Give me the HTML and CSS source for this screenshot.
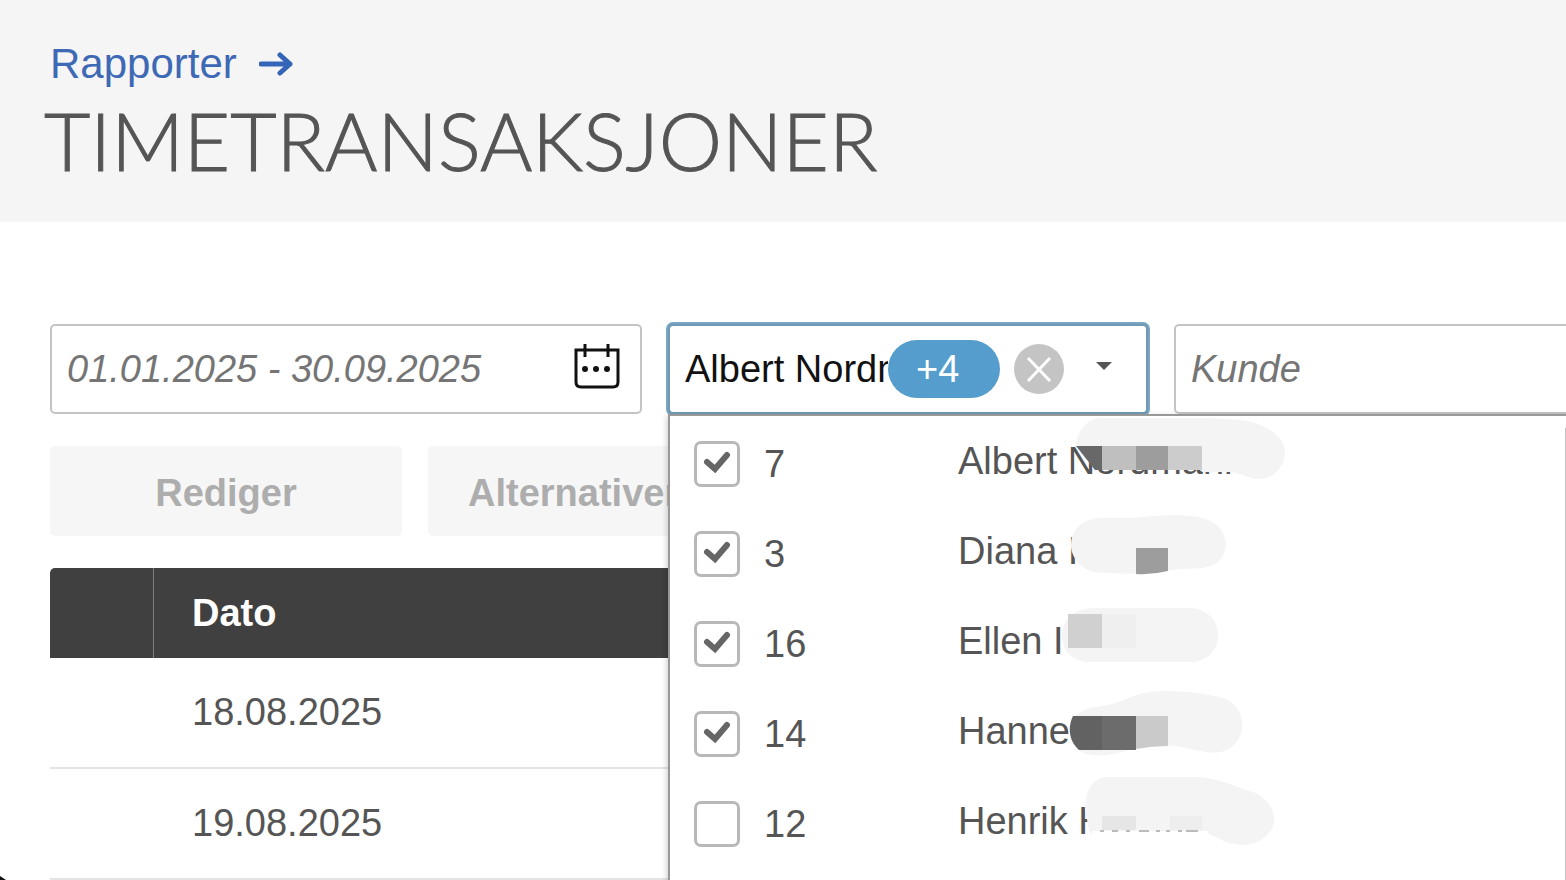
FILE: index.html
```html
<!DOCTYPE html>
<html lang="no">
<head>
  <meta charset="UTF-8">
  <title>Timetransaksjoner</title>
  <link rel="stylesheet" href="styles.css">
</head>
<body>
  <header class="page-header">
    <a href="#" class="breadcrumb">
      Rapporter
      <svg class="arrow" viewBox="0 0 34 26" aria-hidden="true">
        <path d="M2 13H31M21 4L31 13L21 22" />
      </svg>
    </a>
    <h1>TIMETRANSAKSJONER</h1>
  </header>

  <main>
    <div class="filters">
      <div class="field">
        <input type="text" class="field-input placeholder" aria-label="Periode" value="01.01.2025 - 30.09.2025">
        <button type="button" class="calendar" aria-label="Velg periode">
          <svg viewBox="0 0 46 46">
            <path d="M2 6H44V38Q44 43 39 43H7Q2 43 2 38Z" />
            <path d="M11 0V13M34 0V13" />
            <g class="dots">
              <circle cx="11" cy="25" r="3" />
              <circle cx="22" cy="25" r="3" />
              <circle cx="33" cy="25" r="3" />
            </g>
          </svg>
        </button>
      </div>

      <div class="field focused">
        <input type="text" class="field-input" aria-label="Ansatt" value="Albert Nordmann">
        <span class="count">+4</span>
        <button type="button" class="clear" aria-label="Fjern valg">
          <svg viewBox="0 0 50 50"><path d="M14 14L36 37M36 14L14 37" /></svg>
        </button>
        <button type="button" class="caret" aria-label="Vis liste">
          <svg viewBox="0 0 16 8"><path d="M0 0H16L8 8Z" /></svg>
        </button>

        <div class="dropdown">
          <label class="option">
            <input type="checkbox" checked>
            <span class="number">7</span>
            <span class="name">Albert Nordmann
              <svg class="mask" viewBox="0 0 240 90">
                <path class="blob" d="M17 28C20 10 30 0 42 -1H150C180 0 195 2 202 6C218 12 228 24 227 34C226 50 214 60 200 60C188 59 182 54 172 51H37L20 27Z" />
                <path fill="#686868" d="M18 27H44V51H37Z" />
                <path fill="#bfbfbf" d="M44 27H78V51H44Z" />
                <path fill="#9d9d9d" d="M78 27H110V51H78Z" />
                <path fill="#cccccc" d="M110 27H144V51H110Z" />
                <path class="blob" d="M144 27H190V56L172 53H144Z" />
              </svg>
            </span>
          </label>
          <label class="option">
            <input type="checkbox" checked>
            <span class="number">3</span>
            <span class="name">Diana I
              <svg class="mask" viewBox="0 0 240 90">
                <path class="blob" d="M13 38C13 20 24 10 42 9L76 9C105 5 140 5 150 11C172 20 172 45 158 54C148 61 135 59 120 60C90 66 55 65 36 63C24 60 14 50 13 38Z" />
                <path fill="#9d9d9d" d="M78 39H110V62Q94 66 78 65Z" />
              </svg>
            </span>
          </label>
          <label class="option">
            <input type="checkbox" checked>
            <span class="number">16</span>
            <span class="name">Ellen I
              <svg class="mask" viewBox="0 0 240 90">
                <path class="blob" d="M4 36C5 20 16 10 34 9H132C168 10 170 60 134 63H30C14 62 4 52 4 36Z" />
                <path fill="#d0d0d0" d="M10 15H44V49H10Z" />
                <path fill="#efefef" d="M44 15H78V49H44Z" />
              </svg>
            </span>
          </label>
          <label class="option">
            <input type="checkbox" checked>
            <span class="number">14</span>
            <span class="name">Hanne
              <svg class="mask" viewBox="0 0 240 90">
                <path class="blob" d="M12 44C13 24 26 19 44 17C66 14 76 2 106 2C130 2 160 6 170 11C188 22 188 45 176 56C162 69 146 62 132 60C110 53 80 58 64 63C44 68 28 68 20 60C14 56 12 50 12 44Z" />
                <path fill="#626262" d="M15 27H44V61H21C10 51 10 37 15 27Z" />
                <path fill="#6c6c6c" d="M44 27H78V61H44Z" />
                <path fill="#cacaca" d="M78 27H110V57Q94 57 78 60Z" />
              </svg>
            </span>
          </label>
          <label class="option">
            <input type="checkbox">
            <span class="number">12</span>
            <span class="name">Henrik H
              <svg class="mask" viewBox="0 0 240 90">
                <path class="blob" d="M27 33C27 14 32 0 48 -2H140C166 0 182 10 198 14C216 24 219 40 214 50C202 68 184 68 168 63C156 57 144 51 132 51L80 58H36C28 52 31 42 27 33Z" />
                <path fill="#e6e6e6" d="M44 37H78V51H44Z" />
                <path fill="#eeeeee" d="M112 37H144V51H112Z" />
                <path class="below" d="M34 52H150V60H34Z" />
                <path class="traces" d="M42 52h4M54 52h6M68 52h4M81 52h10M98 52h4M108 52h4M120 52h4M128 52h12" />
              </svg>
            </span>
          </label>
          <span class="scrollbar"></span>
        </div>
      </div>

      <div class="field">
        <input type="text" class="field-input" aria-label="Kunde" placeholder="Kunde">
      </div>
    </div>

    <div class="actions">
      <button type="button" disabled>Rediger</button>
      <button type="button" disabled>Alternativer</button>
    </div>

    <table class="transactions">
      <thead>
        <tr><th class="select-col"></th><th>Dato</th></tr>
      </thead>
      <tbody>
        <tr><td></td><td>18.08.2025</td></tr>
        <tr><td></td><td>19.08.2025</td></tr>
      </tbody>
    </table>
  </main>
  <div class="window-corner"></div>
</body>
</html>
```
FILE: styles.css
```css
* {
  box-sizing: border-box;
}

body {
  margin: 0;
  height: 100vh;
  overflow: hidden;
  position: relative;
  background: #fff;
  color: #555;
  font-family: "Liberation Sans", Arial, sans-serif;
  font-size: 38px;
}

button, input {
  font: inherit;
}

button {
  border: none;
  padding: 0;
  background: none;
}

.page-header {
  background: #f5f5f5;
  padding: 40px 44px 34px;
}

.breadcrumb {
  display: flex;
  align-items: center;
  gap: 22px;
  padding-left: 6px;
  color: #3e69b5;
  font-size: 42px;
  line-height: 48px;
  text-decoration: none;
}

.arrow {
  width: 34px;
  height: 26px;
  fill: none;
  stroke: #3465b8;
  stroke-width: 5;
  stroke-linecap: round;
  stroke-linejoin: round;
}

h1 {
  margin: 4px 0 0;
  color: #555;
  font-family: Lato, sans-serif;
  font-size: 80px;
  font-weight: 300;
  line-height: 96px;
  -webkit-text-stroke: 1px #555;
}

main {
  padding: 102px 0 0 50px;
}

/* the row is wider than the window, the last field runs out of view */
.filters {
  display: grid;
  grid-template-columns: 37fr 30fr 37fr;
  gap: 26px;
  width: calc(100% + 200px);
}

.field {
  position: relative;
  display: flex;
  align-items: center;
  min-width: 0;
  height: 90px;
  border: 2px solid #c4c4c4;
  border-radius: 5px;
  background: #fff;
}

.focused {
  border-color: #6f9ab5;
  box-shadow: 0 0 0 2px #78a5c2;
}

.field-input {
  flex: 1;
  min-width: 0;
  height: 100%;
  padding: 0 0 0 15px;
  border: none;
  outline: none;
  background: none;
  color: #111;
}

.placeholder,
.field-input::placeholder {
  color: #757575;
  font-style: italic;
  opacity: 1;
}

.calendar {
  width: 46px;
  height: 46px;
  margin: 0 20px 4px 0;
}

.calendar svg,
.clear svg,
.caret svg {
  display: block;
  width: 100%;
}

.calendar svg {
  fill: none;
  stroke: #111;
  stroke-width: 3;
}

.calendar .dots {
  fill: #111;
  stroke: none;
}

.count {
  width: 112px;
  height: 58px;
  padding-left: 28px;
  border-radius: 29px;
  background: #549dcc;
  color: #fff;
  line-height: 58px;
}

.clear {
  width: 50px;
  height: 50px;
  margin-left: 14px;
  border-radius: 50%;
  background: #c4c4c4;
}

.clear svg {
  fill: none;
  stroke: #fff;
  stroke-width: 3;
}

.caret {
  width: 16px;
  margin: 0 34px 6px 32px;
}

.caret svg {
  fill: #555;
}

.dropdown {
  position: absolute;
  z-index: 1;
  top: 88px;
  left: -2px;
  width: 190%;
  min-height: 520px;
  padding-top: 3px;
  border: 2px solid #999;
  background: #fff;
  box-shadow: -1px 2px 6px rgba(0, 0, 0, 0.2);
}

.option {
  display: flex;
  align-items: center;
  height: 90px;
  padding-left: 24px;
}

.option input {
  appearance: none;
  width: 46px;
  height: 46px;
  margin: 0;
  border: 3px solid #b8b8b8;
  border-radius: 7px;
  background: #fff;
}

.option input:checked {
  background: url("data:image/svg+xml,%3Csvg xmlns='http://www.w3.org/2000/svg' viewBox='0 0 40 40'%3E%3Cpath d='M10 18L18 25L30 11' fill='none' stroke='%23666' stroke-width='6' stroke-linecap='round'/%3E%3C/svg%3E") center / 40px 40px no-repeat;
}

.number {
  width: 218px;
  padding-left: 24px;
}

.name {
  position: relative;
  flex: 1;
  height: 90px;
  line-height: 84px;
}

.mask {
  position: absolute;
  top: 0;
  left: 100px;
  width: 240px;
  height: 90px;
  overflow: visible;
}

.blob {
  fill: #f4f4f4;
}

.below {
  fill: #fff;
}

.traces {
  fill: none;
  stroke: #bbb;
  stroke-width: 2;
}

.scrollbar {
  position: absolute;
  top: 12px;
  right: 3px;
  bottom: 0;
  width: 2px;
  background: #c4c4c4;
}

.actions {
  display: flex;
  gap: 26px;
  margin-top: 32px;
}

.actions button {
  height: 90px;
  padding: 4px 40px 0;
  border-radius: 5px;
  background: #f6f6f6;
  color: #adadad;
  font-weight: bold;
}

.actions button:first-child {
  min-width: 352px;
}

.transactions {
  width: 100%;
  margin-top: 32px;
  border-collapse: separate;
  border-spacing: 0;
}

.transactions th {
  height: 90px;
  padding: 0 38px;
  background: #404040;
  color: #fff;
  text-align: left;
}

.transactions .select-col {
  width: 104px;
  border-right: 1px solid #808080;
  border-top-left-radius: 5px;
}

.transactions td {
  height: 111px;
  padding: 0 38px;
  border-bottom: 2px solid #e4e4e4;
}

.window-corner {
  position: absolute;
  left: 0;
  bottom: 0;
  width: 6px;
  height: 4px;
  background: #111;
  clip-path: polygon(0 0, 100% 100%, 0 100%);
}
```
